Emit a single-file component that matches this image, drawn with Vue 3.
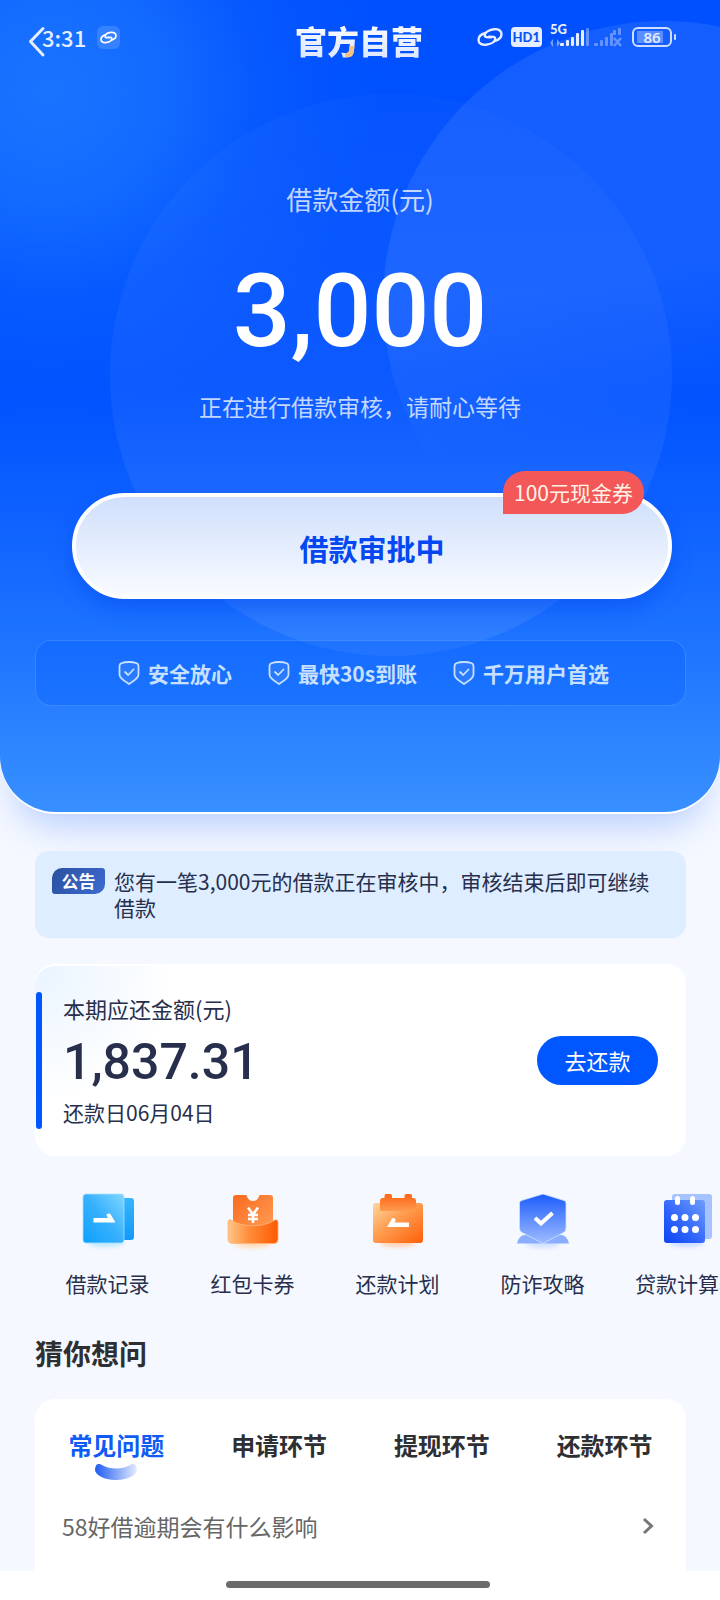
<script setup>
import { ref } from 'vue'

const promises = ['安全放心', '最快30s到账', '千万用户首选']
const tools = [
  { id: 'record', label: '借款记录' },
  { id: 'coupon', label: '红包卡券' },
  { id: 'plan', label: '还款计划' },
  { id: 'guard', label: '防诈攻略' },
  { id: 'calc', label: '贷款计算器' },
]
const tabs = ['常见问题', '申请环节', '提现环节', '还款环节']
const activeTab = ref(0)
const questions = ['58好借逾期会有什么影响']
</script>

<template>
  <div class="page">
    <section class="hero">
      <div class="orb orb-center" aria-hidden="true"></div>
      <div class="orb orb-right" aria-hidden="true"></div>

      <header class="topbar">
        <div class="status-left">
          <span class="time">3:31</span>
          <span class="link-chip">
            <svg width="17" height="13" viewBox="0 0 26 20" fill="none" stroke="currentColor" stroke-width="2.600" stroke-linecap="round">
              <path id="hook" d="M8.500 6C4.500 7 1.500 9.500 1.500 13C1.500 16.500 5 18.300 9 17.800C13.500 17.200 18 15 18.200 12C18.400 9.500 15.500 9.600 12 9.600" />
              <use href="#hook" transform="rotate(180 13 10)" />
            </svg>
          </span>
        </div>
        <h1 class="title">官方自营</h1>
        <div class="status-right">
          <svg width="26" height="20" viewBox="0 0 26 20" fill="none" stroke="currentColor" stroke-width="2.400" stroke-linecap="round">
            <use href="#hook" />
            <use href="#hook" transform="rotate(180 13 10)" />
          </svg>
          <span class="hd">HD1</span>
          <svg class="signals" width="72" height="26" viewBox="0 0 72 26" fill="currentColor">
            <text x="0" y="12" class="net">5G</text>
            <path d="M0 21l3-4v8zM7 17v8l3-4z" opacity=".5" />
            <rect x="10" y="21" width="4" height="3" rx="1" />
            <rect x="16" y="18" width="3" height="6" rx="1" />
            <rect x="21" y="15" width="3" height="9" rx="1" />
            <rect x="26" y="11" width="3" height="13" rx="1" />
            <rect x="31" y="8" width="3" height="16" rx="1" />
            <g opacity=".38">
              <rect x="36" y="6" width="3" height="18" rx="1" />
              <rect x="44" y="21" width="4" height="3" rx="1" />
              <rect x="50" y="18" width="3" height="6" rx="1" />
              <rect x="55" y="15" width="3" height="9" rx="1" />
              <rect x="60" y="11" width="3" height="13" rx="1" />
              <rect x="63" y="8" width="3" height="5" rx="1" />
              <rect x="68" y="6" width="3" height="7" rx="1" />
              <path d="M64 16l7 8M71 16l-7 8" stroke="currentColor" stroke-width="2.500" />
            </g>
          </svg>
          <span class="battery"><span class="battery-box">86</span><span class="battery-tip"></span></span>
        </div>
        <button class="back" type="button" aria-label="返回">
          <svg width="18" height="32" viewBox="0 0 18 32" fill="none" stroke="currentColor" stroke-width="3" stroke-linecap="round" stroke-linejoin="round">
            <path d="M15 2.500L2.500 15.500L15 29" />
          </svg>
        </button>
      </header>

      <p class="amount-label">借款金额(元)</p>
      <p class="amount">3,000</p>
      <p class="amount-note">正在进行借款审核，请耐心等待</p>

      <div class="cta-wrap">
        <button class="cta" type="button">借款审批中</button>
        <span class="cta-tag">100元现金券</span>
      </div>

      <ul class="promises">
        <li v-for="text in promises" :key="text">
          <svg width="22" height="26" viewBox="0 0 22 26" fill="none" stroke="currentColor" stroke-width="1.800" stroke-linejoin="round" stroke-linecap="round">
            <path d="M11 2C14 2 17 2.500 18.500 3.200Q20.500 4 20.500 6V14.500C20.500 18.500 15 21.500 11 24C7 21.500 1.500 18.500 1.500 14.500V6Q1.500 4 3.500 3.200C5 2.500 8 2 11 2Z" fill="rgba(255,255,255,.08)" />
            <path d="M7 12L10.200 15L15.500 9.500" />
          </svg>
          <span>{{ text }}</span>
        </li>
      </ul>
    </section>

    <section class="notice">
      <span class="notice-tag">公告</span>
      <p>您有一笔3,000元的借款正在审核中，审核结束后即可继续借款</p>
    </section>

    <section class="bill">
      <div class="bill-info">
        <p class="bill-label">本期应还金额(元)</p>
        <p class="bill-amount">1,837.31</p>
        <p class="bill-date">还款日06月04日</p>
      </div>
      <button class="repay" type="button">去还款</button>
    </section>

    <svg class="defs" width="0" height="0" aria-hidden="true">
      <defs>
        <linearGradient id="gBlueFront" x1="0" y1="1" x2="1" y2="0">
          <stop offset="0" stop-color="#0ea0ff" /><stop offset=".5" stop-color="#36b0fd" /><stop offset="1" stop-color="#7fd6ff" />
        </linearGradient>
        <linearGradient id="gBlueBack" x1="0" y1="0" x2="0" y2="1">
          <stop offset="0" stop-color="#35b6fb" /><stop offset="1" stop-color="#1498fa" />
        </linearGradient>
        <linearGradient id="gTicket" x1="0" y1="0" x2="1" y2="1">
          <stop offset="0" stop-color="#fb6a1c" /><stop offset="1" stop-color="#ffa05a" />
        </linearGradient>
        <linearGradient id="gTray" x1="0" y1="0" x2="1" y2="0">
          <stop offset="0" stop-color="#ffc588" /><stop offset=".4" stop-color="#ff8f3c" /><stop offset="1" stop-color="#fd5a02" />
        </linearGradient>
        <linearGradient id="gPlan" x1="0" y1="0" x2="1" y2="1">
          <stop offset="0" stop-color="#ffd6a0" /><stop offset=".45" stop-color="#ff9c4e" /><stop offset="1" stop-color="#fd5f0a" />
        </linearGradient>
        <linearGradient id="gPlanTab" x1="0" y1="0" x2="0" y2="1">
          <stop offset="0" stop-color="#fd6412" /><stop offset="1" stop-color="#ff9a50" />
        </linearGradient>
        <linearGradient id="gShield" x1="0" y1="0" x2="0" y2="1">
          <stop offset="0" stop-color="#1b5cfb" /><stop offset="1" stop-color="#9fbcff" />
        </linearGradient>
        <linearGradient id="gCalc" x1="1" y1="0" x2="0" y2="1">
          <stop offset="0" stop-color="#6f9dff" /><stop offset=".6" stop-color="#2c62fa" /><stop offset="1" stop-color="#0c45f5" />
        </linearGradient>
        <filter id="soft" x="-30%" y="-100%" width="160%" height="300%"><feGaussianBlur stdDeviation="2" /></filter>
      </defs>
    </svg>

    <nav class="tools">
      <a v-for="tool in tools" :key="tool.id" href="#" class="tool">
        <svg v-if="tool.id === 'record'" width="64" height="64" viewBox="0 0 64 64">
          <ellipse cx="30" cy="55" rx="18" ry="4" fill="#bfe7ff" filter="url(#soft)" />
          <rect x="40" y="10" width="18" height="42" rx="3" fill="url(#gBlueBack)" />
          <rect x="7" y="6" width="41" height="49" rx="3" fill="url(#gBlueFront)" stroke="#a5e0ff" stroke-width=".8" />
          <path d="M17.500 30H32L30.500 27C31.500 25 34 25 35 27L39.500 34.500H17.500Z" fill="#fff" />
        </svg>
        <svg v-else-if="tool.id === 'coupon'" width="64" height="64" viewBox="0 0 64 64">
          <ellipse cx="32" cy="56" rx="18" ry="4" fill="#ffdcb8" filter="url(#soft)" />
          <path d="M15 7H25C26.500 7 26 13 32 13C38 13 37.500 7 39 7H49Q52 7 52 10V44H12V10Q12 7 15 7Z" fill="url(#gTicket)" />
          <path d="M7 35Q7 30 11 32.500C21 39.500 43 39.500 53 32.500Q57 30 57 35V51Q57 55.500 52.500 55.500H11.500Q7 55.500 7 51Z" fill="url(#gTray)" stroke="#ffb47a" stroke-width=".8" />
          <path d="M27 19.500L32 26.500L37 19.500M32 26.500V35M27 27H37M27 31H37" fill="none" stroke="#fff" stroke-width="2.600" />
        </svg>
        <svg v-else-if="tool.id === 'plan'" width="64" height="64" viewBox="0 0 64 64">
          <ellipse cx="32" cy="55" rx="18" ry="4" fill="#ffd2b0" filter="url(#soft)" />
          <rect x="7" y="15" width="50" height="40" rx="3" fill="url(#gPlan)" />
          <path d="M17 10H18.500V8Q18.500 6 20.500 6H24Q26 6 26 8V10H38.500V8Q38.500 6 40.500 6H44Q46 6 46 8V10H47Q50 10 50 13V23H14V13Q14 10 17 10Z" fill="url(#gPlanTab)" />
          <path d="M21 39L26 30.500C27.500 29 30 31 29.500 32.500L28.500 34.500H43V39Z" fill="#fff" />
        </svg>
        <svg v-else-if="tool.id === 'guard'" width="64" height="64" viewBox="0 0 64 64">
          <ellipse cx="32" cy="56" rx="17" ry="4" fill="#d3e0ff" filter="url(#soft)" />
          <path d="M6 55.500Q8 47 14 47H50Q56 47 58 55.500Z" fill="#8aadfd" />
          <path d="M32 6L53 12.500Q55 13 55 15V40Q55 43 52.500 44.500L32 55.500L11 44.500Q8.500 43 8.500 40V15Q8.500 13 10.500 12.500Z" fill="url(#gShield)" stroke="#cfdeff" stroke-width=".8" />
          <path d="M24 30L30 35.500L41.500 25" fill="none" stroke="#fff" stroke-width="4" />
        </svg>
        <svg v-else width="64" height="64" viewBox="0 0 64 64">
          <ellipse cx="31" cy="55" rx="17" ry="4" fill="#cbdcff" filter="url(#soft)" />
          <rect x="16" y="6" width="40" height="45" rx="3" fill="#a6c2ff" />
          <rect x="8" y="12" width="41" height="43" rx="3" fill="url(#gCalc)" />
          <g fill="#fff">
            <rect x="19" y="8" width="5" height="9" rx="2.500" />
            <rect x="34" y="8" width="5" height="9" rx="2.500" />
            <circle cx="18.500" cy="29.500" r="3.500" /><circle cx="29" cy="29.500" r="3.500" /><circle cx="39.500" cy="29.500" r="3.500" />
            <circle cx="18.500" cy="41.500" r="3.500" /><circle cx="29" cy="41.500" r="3.500" /><circle cx="39.500" cy="41.500" r="3.500" />
          </g>
        </svg>
        <span>{{ tool.label }}</span>
      </a>
    </nav>

    <h2 class="heading">猜你想问</h2>

    <section class="faq">
      <div class="tabs" role="tablist">
        <button
          v-for="(tab, i) in tabs"
          :key="tab"
          type="button"
          role="tab"
          class="tab"
          :class="{ active: i === activeTab }"
          :aria-selected="i === activeTab"
          @click="activeTab = i"
        >
          <span>{{ tab }}</span>
          <svg v-if="i === activeTab" width="42" height="16" viewBox="0 0 42 16">
            <defs>
              <linearGradient id="gSmile" x1="0" y1="0" x2="1" y2="0">
                <stop offset="0" stop-color="#1f5cf2" /><stop offset="1" stop-color="#e3ebff" />
              </linearGradient>
            </defs>
            <path d="M5 0C15 6 27 6 37 0C40-1 42 2 42 6C42 10 34 16 21 16C8 16 0 10 0 6C0 2 2-1 5 0Z" fill="url(#gSmile)" />
          </svg>
        </button>
      </div>
      <a v-for="q in questions" :key="q" class="question" href="#">
        <span>{{ q }}</span>
        <svg width="12" height="18" viewBox="0 0 12 18" fill="none" stroke="#777" stroke-width="3">
          <path d="M2 2L9.500 9L2 16" />
        </svg>
      </a>
    </section>

    <footer class="home-bar"><span></span></footer>
  </div>
</template>

<style>
body {
  margin: 0;
  background: #f5f8ff;
}
</style>

<style scoped>
.page {
  display: flex;
  flex-direction: column;
  min-height: 100vh;
  overflow: hidden;
  background: #f5f8ff;
  color: #272f4d;
  font-family: "Noto Sans CJK SC", sans-serif;
}
p, h1, h2, ul {
  margin: 0;
  padding: 0;
}
button {
  padding: 0;
  border: 0;
  background: none;
  color: inherit;
  font: inherit;
  cursor: pointer;
}
a {
  color: inherit;
  text-decoration: none;
}
.defs {
  position: absolute;
}

.hero {
  position: relative;
  display: flex;
  flex-direction: column;
  align-items: center;
  padding-bottom: 106px;
  overflow: hidden;
  border-radius: 0 0 56px 56px;
  background:
    radial-gradient(circle at 50px 90px, rgba(30, 122, 255, .85), rgba(26, 116, 255, .75) 110px, rgba(16, 100, 255, .4) 210px, rgba(0, 80, 255, 0) 330px),
    linear-gradient(180deg, #0050ff 0%, #0052ff 48%, #0f62ff 64%, #1f75ff 80%, #3890ff 100%);
  box-shadow: 0 2px 0 #fff, 0 28px 36px -14px rgba(60, 120, 255, .32);
  color: #fff;
}
.orb {
  position: absolute;
  width: 562px;
  height: 562px;
  border-radius: 50%;
}
.orb-center {
  top: 94px;
  left: 110px;
  background: linear-gradient(180deg, rgba(255, 255, 255, .02), rgba(255, 255, 255, .08));
}
.orb-right {
  top: 21px;
  left: 383px;
  background: linear-gradient(170deg, rgba(255, 255, 255, .08) 10%, rgba(255, 255, 255, .08) 45%, rgba(255, 255, 255, 0) 68%);
}

.topbar {
  position: relative;
  display: grid;
  grid-template-columns: 1fr auto 1fr;
  box-sizing: border-box;
  width: 100%;
  height: 84px;
  padding: 18px 44px 0 42px;
  align-items: start;
}
.status-left, .status-right {
  display: flex;
  align-items: center;
  height: 38px;
}
.status-left {
  gap: 11px;
}
.status-right {
  justify-content: flex-end;
  gap: 8px;
  color: #e6eeff;
}
.time {
  font-size: 22px;
  font-weight: 500;
  line-height: 36px;
  color: #e6eeff;
}
.link-chip {
  display: flex;
  align-items: center;
  justify-content: center;
  width: 23px;
  height: 23px;
  border-radius: 6px;
  background: rgba(255, 255, 255, .14);
}
.title {
  margin-top: 2px;
  font-size: 32px;
  font-weight: 900;
  line-height: 40px;
  color: transparent;
  background:
    linear-gradient(#f6c37f, #f6c37f) 50px 26px / 13px 12px no-repeat,
    linear-gradient(180deg, #fff, #dbe5ff);
  background-clip: text;
  -webkit-background-clip: text;
}
.hd {
  padding: 0 2px;
  border-radius: 4px;
  background: #e6eeff;
  color: #0a55f5;
  font-family: Lato, sans-serif;
  font-size: 13px;
  font-weight: 900;
  line-height: 20px;
}
.net {
  font-family: Lato, sans-serif;
  font-size: 13px;
  font-weight: 900;
}
.signals {
  margin-bottom: 4px;
}
.battery {
  display: flex;
  align-items: center;
  gap: 2px;
  margin-left: 2px;
}
.battery-box {
  box-sizing: border-box;
  width: 40px;
  height: 20px;
  border: 2px solid #cfdeff;
  border-radius: 6px;
  background: linear-gradient(rgba(255, 255, 255, .3), rgba(255, 255, 255, .3)) 3px 2px / 26px 12px no-repeat;
  font-family: "Open Sans", sans-serif;
  font-size: 15px;
  font-weight: 600;
  line-height: 16px;
  text-align: center;
}
.battery-tip {
  width: 2px;
  height: 6px;
  border-radius: 1px;
  background: #cfdeff;
}
.back {
  position: absolute;
  top: 26px;
  left: 28px;
  height: 32px;
  color: #e6eeff;
}

.amount-label {
  position: relative;
  margin-top: 97px;
  font-size: 26px;
  line-height: 36px;
  color: rgba(255, 255, 255, .76);
}
.amount {
  position: relative;
  margin-top: 42px;
  font-family: Roboto, sans-serif;
  font-size: 102px;
  font-weight: 500;
  line-height: 104px;
}
.amount-note {
  position: relative;
  margin-top: 27px;
  font-size: 23px;
  line-height: 32px;
  color: rgba(255, 255, 255, .76);
}
.cta-wrap {
  position: relative;
  align-self: stretch;
  margin: 71px 48px 0 72px;
}
.cta {
  display: block;
  box-sizing: border-box;
  width: 100%;
  height: 106px;
  padding-top: 4px;
  border: 4px solid #fff;
  border-radius: 53px;
  background: linear-gradient(180deg, #d0dffc, #f8fbff);
  box-shadow: 0 10px 20px rgba(0, 70, 240, .45);
  color: #0548f2;
  font-size: 29px;
  font-weight: 700;
}
.cta-tag {
  position: absolute;
  top: -22px;
  right: 28px;
  padding: 0 11px;
  border-radius: 22px 22px 22px 0;
  background: #f35757;
  color: #fff3e8;
  font-size: 21px;
  line-height: 43px;
}
.promises {
  position: relative;
  display: flex;
  align-self: stretch;
  justify-content: center;
  gap: 36px;
  box-sizing: border-box;
  height: 66px;
  margin: 41px 34px 0 35px;
  padding-left: 6px;
  border: 1px solid rgba(120, 175, 255, .35);
  border-radius: 16px;
  background: rgba(0, 90, 255, .3);
  list-style: none;
}
.promises li {
  display: flex;
  align-items: center;
  gap: 8px;
  font-size: 21px;
  font-weight: 700;
  color: #c8e0ff;
}

.notice {
  display: flex;
  align-items: flex-start;
  gap: 9px;
  box-sizing: border-box;
  min-height: 87px;
  margin: 39px 34px 0 35px;
  padding: 17px 24px 17px 17px;
  border-radius: 14px;
  background: #deedff;
  position: relative;
}
.notice-tag {
  flex: none;
  width: 53px;
  border-radius: 10px 3px;
  background: linear-gradient(120deg, #2b509f, #3c6bd0);
  color: #fff;
  font-size: 17px;
  font-weight: 700;
  line-height: 26px;
  text-align: center;
}
.notice p {
  font-size: 21px;
  line-height: 26px;
}

.bill {
  position: relative;
  display: flex;
  align-items: center;
  justify-content: space-between;
  box-sizing: border-box;
  min-height: 192px;
  margin: 26px 34px 0 35px;
  padding: 0 28px 0 1px;
  border-radius: 20px;
  background: radial-gradient(circle at 0 0, #e9f4ff, #fff 140px);
  box-shadow: inset 0 2px 0 #fff;
}
.bill-info {
  position: relative;
  padding-left: 27px;
}
.bill-info::before {
  content: "";
  position: absolute;
  top: 0;
  bottom: 0;
  left: 0;
  width: 6px;
  border-radius: 3px;
  background: #0057ff;
}
.bill-label {
  font-size: 22px;
  line-height: 32px;
}
.bill-amount {
  padding: 14px 0 10px;
  font-family: Roboto, sans-serif;
  font-size: 50px;
  font-weight: 500;
  line-height: 48px;
}
.bill-date {
  font-size: 21px;
  line-height: 33px;
}
.repay {
  width: 121px;
  height: 49px;
  border-radius: 25px;
  background: #0057ff;
  color: #fff;
  font-size: 22px;
}

.tools {
  display: flex;
  margin-top: 32px;
  padding-left: 35px;
  overflow: hidden;
}
.tool {
  display: flex;
  flex: 0 0 145px;
  flex-direction: column;
  align-items: center;
  gap: 15px;
  font-size: 21px;
  line-height: 32px;
}

.heading {
  margin: 34px 35px 0;
  font-size: 28px;
  font-weight: 700;
  line-height: 40px;
  color: #2e2f33;
}
.faq {
  flex: 1;
  margin: 26px 34px 0 35px;
  border-radius: 20px 20px 0 0;
  background: #fff;
}
.tabs {
  display: grid;
  grid-template-columns: repeat(4, 1fr);
  align-items: start;
  height: 97px;
}
.tab {
  display: flex;
  flex-direction: column;
  align-items: center;
  gap: 1px;
  padding-top: 28px;
  font-size: 24px;
  font-weight: 700;
  line-height: 36px;
  color: #2e2f33;
}
.tab.active {
  color: #0f5cf5;
}
.question {
  display: flex;
  align-items: center;
  justify-content: space-between;
  padding: 12px 32px 27px 27px;
  color: #666;
  font-size: 23px;
  line-height: 36px;
}
.home-bar {
  display: flex;
  justify-content: center;
  box-sizing: border-box;
  height: 29px;
  padding: 10px 4px 0 0;
  background: #fff;
}
.home-bar span {
  width: 37%;
  height: 7px;
  border-radius: 4px;
  background: #6b6b6b;
}
</style>
